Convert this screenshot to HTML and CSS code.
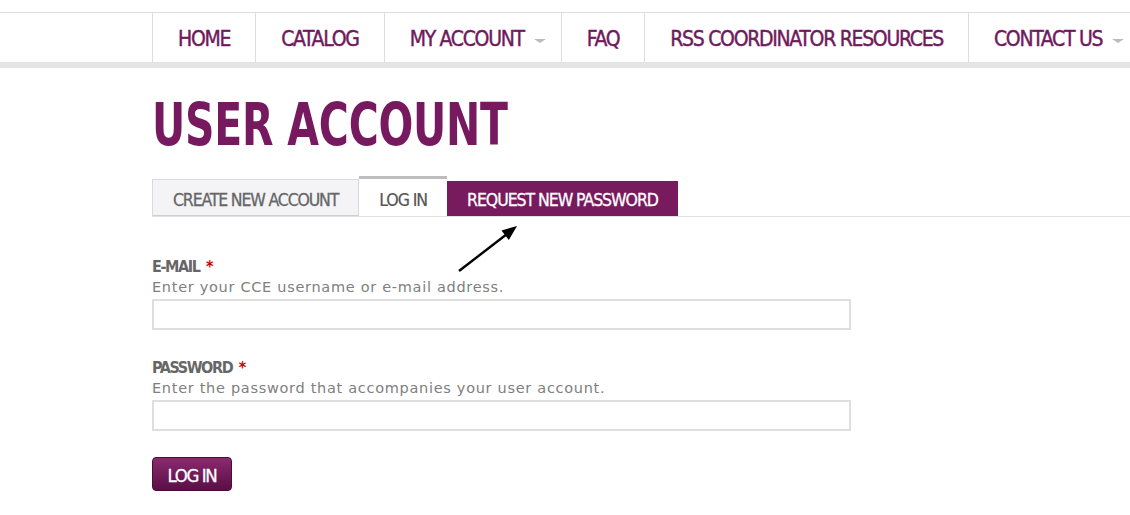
FILE: index.html
```html
<!DOCTYPE html>
<html lang="en">
<head>
<meta charset="utf-8">
<title>User account</title>
<link rel="stylesheet" href="styles.css">
</head>
<body>
<header class="site-nav">
  <ul class="menu">
    <li class="menu-item"><a href="#">HOME</a></li>
    <li class="menu-item"><a href="#">CATALOG</a></li>
    <li class="menu-item has-sub"><a href="#">MY ACCOUNT</a><span class="caret"></span></li>
    <li class="menu-item"><a href="#">FAQ</a></li>
    <li class="menu-item"><a href="#">RSS COORDINATOR RESOURCES</a></li>
    <li class="menu-item has-sub"><a href="#">CONTACT US</a><span class="caret"></span></li>
  </ul>
</header>
<main class="content">
  <h1 class="page-title">USER ACCOUNT</h1>
  <div class="tabs-wrap">
    <ul class="tabs">
      <li class="tab tab-create"><a href="#">CREATE NEW ACCOUNT</a></li>
      <li class="tab tab-active"><a href="#">LOG IN</a></li>
      <li class="tab tab-request"><a href="#">REQUEST NEW PASSWORD</a></li>
    </ul>
    <svg class="arrow" width="70" height="56" viewBox="0 0 70 56">
      <line x1="7" y1="51" x2="55" y2="14" stroke="#000" stroke-width="2.4"/>
      <polygon points="65,6 56.8,19.9 49.5,10.5" fill="#000"/>
    </svg>
  </div>
  <form class="login-form">
    <div class="field">
      <label class="field-label">E-MAIL <span class="req">*</span></label>
      <div class="field-desc">Enter your CCE username or e-mail address.</div>
      <input class="field-input" type="text">
    </div>
    <div class="field field-pass">
      <label class="field-label">PASSWORD <span class="req">*</span></label>
      <div class="field-desc">Enter the password that accompanies your user account.</div>
      <input class="field-input" type="password">
    </div>
    <button class="submit" type="button">LOG IN</button>
  </form>
</main>
</body>
</html>
```
FILE: styles.css
```css
* { box-sizing: border-box; }
body {
  margin: 0;
  background: #fff;
  font-family: "DejaVu Sans Condensed", "DejaVu Sans", sans-serif;
}
.site-nav {
  margin-top: 12px;
  border-top: 1px solid #dcdcdc;
  border-bottom: 6px solid #e4e4e4;
  overflow: hidden;
}
.menu {
  list-style: none;
  margin: 0;
  padding: 0 0 0 152px;
  display: flex;
  height: 49px;
  white-space: nowrap;
}
.menu-item {
  display: flex;
  align-items: flex-start;
  padding: 0 25px;
  border-left: 1px solid #dcdcdc;
  flex-shrink: 0;
}
.menu-item a {
  display: block;
  color: #6f1a5c;
  text-decoration: none;
  font-size: 21px;
  letter-spacing: -1.3px;
  line-height: 45px;
  padding-top: 4px;
  -webkit-text-stroke: 0.4px #6f1a5c;
}
.caret {
  width: 0; height: 0;
  margin-top: 26px;
  margin-left: 10px;
  margin-right: -10px;
  border-left: 6px solid transparent;
  border-right: 6px solid transparent;
  border-top: 4px solid #bcbcbc;
}
.content {
  padding-left: 152px;
}
.page-title {
  margin: 0;
  padding-top: 25px;
  color: #76195e;
  font-weight: bold;
  font-size: 58px;
  line-height: 64px;
  letter-spacing: -0.3px;
  white-space: nowrap;
  transform: scaleX(0.785);
  transform-origin: left center;
}
.tabs-wrap {
  position: relative;
  margin-top: 19px;
}
.tabs {
  list-style: none;
  margin: 0;
  padding: 0;
  display: flex;
  align-items: flex-end;
  border-bottom: 1px solid #e2e2e2;
}
.tab a {
  display: block;
  text-decoration: none;
  font-size: 17.5px;
  letter-spacing: -1.05px;
  padding: 0 20px;
  white-space: nowrap;
}
.tab-create a {
  background: #f4f4f7;
  border: 1px solid #d9d9dc;
  border-bottom-color: #cfcfcf;
  color: #666;
  padding-top: 6px;
  line-height: 29px;
  letter-spacing: -1.15px;
  -webkit-text-stroke: 0.3px #666;
}
.tab-active a {
  border-top: 3px solid #bdbdbd;
  color: #555;
  background: #fff;
  padding-top: 6px;
  line-height: 31px;
  -webkit-text-stroke: 0.2px #555;
}
.tab-request a {
  background: #771a5e;
  color: #fff;
  padding-top: 4px;
  line-height: 31px;
  -webkit-text-stroke: 0.3px #fff;
}
.arrow {
  position: absolute;
  left: 300px;
  top: 44px;
}
.login-form {
  padding-top: 40px;
}
.field {
  width: 699px;
}
.field-pass {
  margin-top: 28px;
}
.field-label {
  display: block;
  font-weight: bold;
  color: #666;
  font-size: 16px;
  letter-spacing: -1.4px;
  line-height: 20px;
}
.req {
  color: #c00;
  margin-left: 3px;
}
.field-desc {
  font-family: "DejaVu Sans", sans-serif;
  color: #808080;
  font-size: 14.5px;
  letter-spacing: 0.7px;
  line-height: 18px;
  margin-top: 1px;
  margin-bottom: 3px;
  white-space: nowrap;
}
.field-input {
  display: block;
  width: 699px;
  height: 31px;
  border: 2px solid #dfdfdf;
  background: #fff;
  margin: 0;
  padding: 0 6px;
}
.submit {
  display: block;
  margin-top: 26px;
  width: 80px;
  height: 34px;
  border: 1px solid #4d0b3b;
  border-radius: 4px;
  background: linear-gradient(#8a2a70, #5a0e45);
  color: #fff;
  font-family: inherit;
  font-size: 18.5px;
  letter-spacing: -1.4px;
  padding: 3px 0 0;
  -webkit-text-stroke: 0.3px #fff;
}
```
